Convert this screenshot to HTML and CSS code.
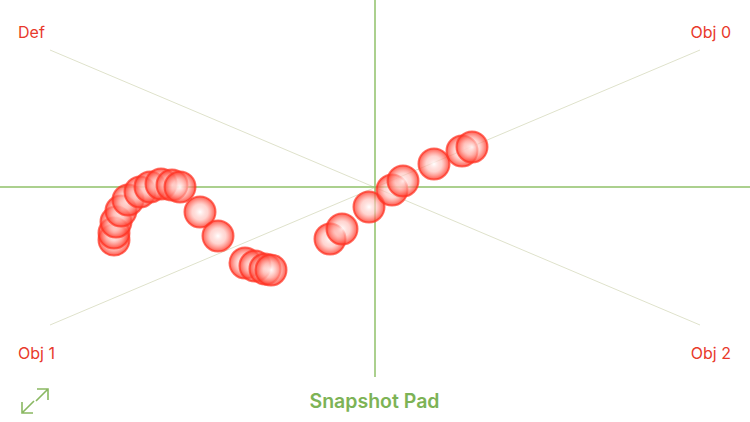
FILE: index.html
```html
<!DOCTYPE html>
<html>
<head>
<meta charset="utf-8">
<link rel="stylesheet" href="styles.css">
</head>
<body>
<div class="pad">
  <svg class="canvas" width="750" height="422" viewBox="0 0 750 422">
    <defs>
      <radialGradient id="ball" cx="50%" cy="50%" r="50%">
        <stop offset="0%" stop-color="#ffffff" stop-opacity="0.85"/>
        <stop offset="50%" stop-color="#ffb9b2" stop-opacity="0.6"/>
        <stop offset="100%" stop-color="#ff3020" stop-opacity="0.8"/>
      </radialGradient>
    </defs>
    <line x1="50" y1="50" x2="700" y2="325" class="diag"/>
    <line x1="700" y1="50" x2="50" y2="325" class="diag"/>
    <line x1="0" y1="187" x2="750" y2="187" class="axis"/>
    <line x1="375" y1="0" x2="375" y2="377" class="axis"/>
    <g class="balls">
      <circle cx="114" cy="240" r="15.5"/>
      <circle cx="114" cy="233" r="15.5"/>
      <circle cx="116" cy="222" r="15.5"/>
      <circle cx="121" cy="211" r="15.5"/>
      <circle cx="128" cy="200" r="15.5"/>
      <circle cx="140" cy="192" r="15.5"/>
      <circle cx="150" cy="187" r="15.5"/>
      <circle cx="161" cy="184" r="15.5"/>
      <circle cx="172" cy="185" r="15.5"/>
      <circle cx="180" cy="187" r="15.5"/>
      <circle cx="200" cy="212" r="15.5"/>
      <circle cx="218" cy="236" r="15.5"/>
      <circle cx="245" cy="263" r="15.5"/>
      <circle cx="255" cy="266" r="15.5"/>
      <circle cx="265" cy="269" r="15.5"/>
      <circle cx="271" cy="270" r="15.5"/>
      <circle cx="330" cy="239" r="15.5"/>
      <circle cx="342" cy="229" r="15.5"/>
      <circle cx="369" cy="207" r="15.5"/>
      <circle cx="392" cy="190" r="15.5"/>
      <circle cx="403" cy="181" r="15.5"/>
      <circle cx="434" cy="164" r="15.5"/>
      <circle cx="462" cy="151" r="15.5"/>
      <circle cx="472" cy="147" r="15.5"/>
    </g>
  </svg>
  <div class="labels">
    <div class="row top">
      <span class="lbl">Def</span>
      <span class="lbl">Obj 0</span>
    </div>
    <div class="row bottom">
      <span class="lbl">Obj 1</span>
      <span class="lbl">Obj 2</span>
    </div>
    <div class="footer">
      <svg class="expand" width="32" height="32" viewBox="0 0 32 32">
        <path d="M18 4 H29 V15 M29 4 L17 16 M3 17 V28 H14 M3 28 L15 16" fill="none" stroke="#8ab862" stroke-width="1.6"/>
      </svg>
      <span class="title">Snapshot Pad</span>
    </div>
  </div>
</div>
</body>
</html>
```
FILE: styles.css
```css
html, body {
  margin: 0;
  padding: 0;
  background: #ffffff;
}
.pad {
  position: relative;
  width: 750px;
  height: 422px;
  overflow: hidden;
  font-family: "Inter", "Roboto", "Liberation Sans", sans-serif;
}
.canvas {
  position: absolute;
  left: 0;
  top: 0;
}
.diag {
  stroke: #dfe2cb;
  stroke-width: 1;
}
.axis {
  stroke: #8fc068;
  stroke-width: 1.5;
}
.balls circle {
  fill: url(#ball);
  stroke: #ff3324;
  stroke-opacity: 0.7;
  stroke-width: 2;
}
.labels {
  position: relative;
  display: flex;
  flex-direction: column;
  height: 422px;
  box-sizing: border-box;
  padding: 23px 19px 0 18px;
}
.row {
  display: flex;
  justify-content: space-between;
}
.bottom {
  margin-top: 302px;
}
.lbl {
  color: #e8392b;
  font-size: 16px;
  line-height: 19px;
}
.footer {
  position: relative;
  display: flex;
  justify-content: center;
  margin-top: 26px;
}
.expand {
  position: absolute;
  left: 1px;
  top: -4px;
}
.title {
  color: #7db356;
  font-size: 19.5px;
  font-weight: 600;
  line-height: 24px;
}
```
